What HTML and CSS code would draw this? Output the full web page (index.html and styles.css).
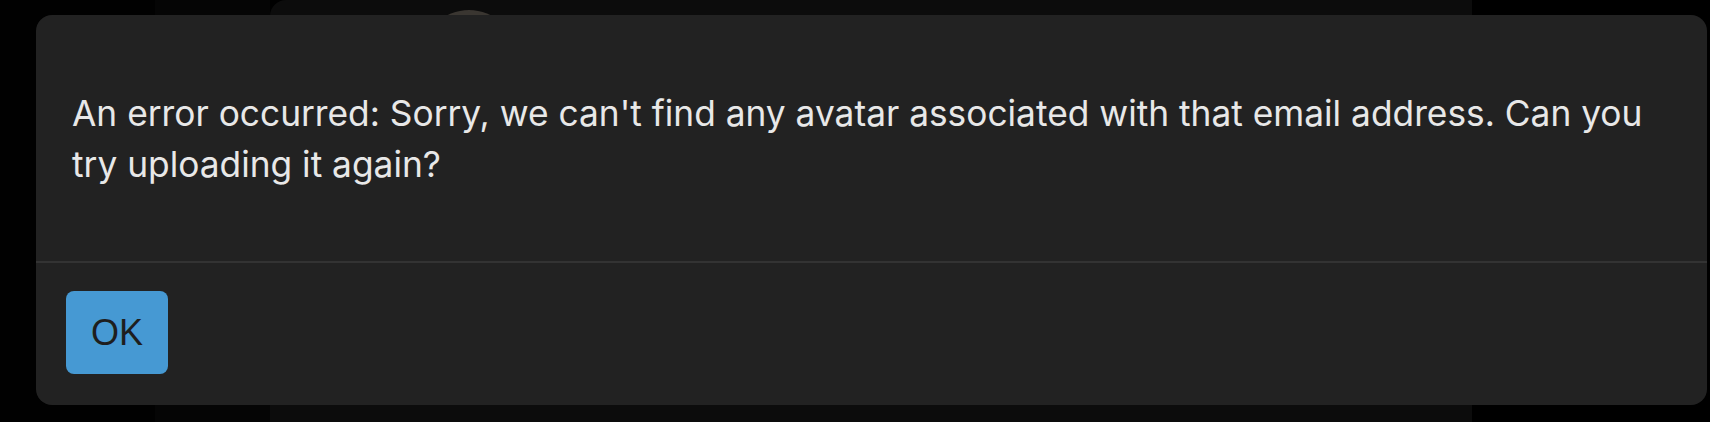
FILE: index.html
```html
<!DOCTYPE html>
<html lang="en">
<head>
<meta charset="utf-8">
<title>Error</title>
<link rel="stylesheet" href="styles.css">
</head>
<body>
<div class="page">
  <div class="sidebar"></div>
  <div class="rail"></div>
  <div class="main">
    <div class="avatar"></div>
  </div>
</div>
<div class="dialog" role="dialog">
  <div class="dialog-body">
    <p class="message">An error occurred: Sorry, we can't find any avatar associated with that email address. Can you try uploading it again?</p>
  </div>
  <div class="dialog-footer">
    <button class="btn-ok">OK</button>
  </div>
</div>
</body>
</html>
```

FILE: styles.css
```css
html, body {
  margin: 0;
  padding: 0;
  height: 100%;
  background: #000;
  overflow: hidden;
}

.page {
  display: flex;
  height: 422px;
}

.sidebar {
  width: 155px;
  background: #010101;
}

.rail {
  width: 115px;
  background: #050505;
}

.main {
  width: 1202px;
  background: #0c0c0c;
  border-top-left-radius: 16px;
  padding-top: 10px;
  padding-left: 152px;
  box-sizing: border-box;
}

.avatar {
  width: 94px;
  height: 94px;
  border-radius: 50%;
  background: #3a3631;
}

.dialog {
  position: fixed;
  left: 36px;
  top: 15px;
  width: 1671px;
  height: 390px;
  background: #222222;
  border-radius: 16px;
  display: flex;
  flex-direction: column;
  font-family: Inter, "Noto Sans", sans-serif;
}

.dialog-body {
  height: 248px;
  box-sizing: border-box;
  padding: 73px 36px 0 36px;
  border-bottom: 2px solid #333333;
}

.message {
  margin: 0;
  font-size: 35.3px;
  line-height: 51px;
  color: #e8e8e8;
}

.dialog-footer {
  padding: 28px 30px;
}

.btn-ok {
  width: 102px;
  height: 83px;
  border: none;
  border-radius: 8px;
  background: #4699d3;
  color: #1e1e1e;
  font-family: "Liberation Sans", Arial, sans-serif;
  font-size: 36px;
  padding: 0;
}
```
